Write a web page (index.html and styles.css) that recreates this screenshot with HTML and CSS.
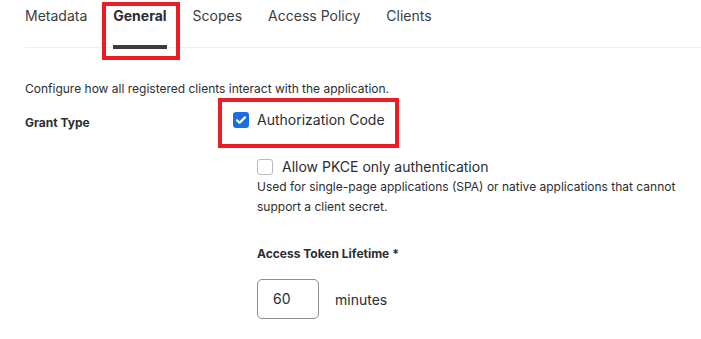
FILE: index.html
```html
<!DOCTYPE html>
<html>
<head>
<meta charset="utf-8">
<link rel="stylesheet" href="styles.css">
</head>
<body>
<div class="page">
  <nav class="tabs">
    <span class="tab">Metadata</span>
    <span class="tab active">General</span>
    <span class="tab">Scopes</span>
    <span class="tab">Access Policy</span>
    <span class="tab">Clients</span>
  </nav>
  <p class="intro">Configure how all registered clients interact with the application.</p>
  <div class="form-row">
    <div class="label">Grant Type</div>
    <div class="controls">
      <label class="check main">
        <span class="box checked"><svg viewBox="0 0 16 16" width="16" height="16"><path d="M4 8.3l2.6 2.5L12 5.4" fill="none" stroke="#fff" stroke-width="2.2" stroke-linecap="round" stroke-linejoin="round"/></svg></span>
        <span>Authorization Code</span>
      </label>
      <div class="sub">
        <label class="check">
          <span class="box"></span>
          <span>Allow PKCE only authentication</span>
        </label>
        <p class="help">Used for single-page applications (SPA) or native applications that cannot support a client secret.</p>
        <div class="field-label">Access Token Lifetime <span class="req">*</span></div>
        <div class="lifetime">
          <div class="input">60</div>
          <span class="unit">minutes</span>
        </div>
      </div>
    </div>
  </div>
  <div class="mark mark-tab"></div>
  <div class="mark mark-auth"></div>
</div>
</body>
</html>
```
FILE: styles.css
```css
html, body { margin: 0; padding: 0; background: #fff; }
body { font-family: Inter, "Noto Sans", sans-serif; color: #2b2d31; }
.page { position: relative; width: 701px; height: 339px; overflow: hidden; padding-left: 25px; box-sizing: border-box; }
.tabs { display: flex; gap: 26px; height: 47px; border-bottom: 1px solid #efefef; }
.tab { font-size: 14px; line-height: 20px; padding-top: 6px; height: 45px; box-sizing: content-box; color: #3a3c42; border-bottom: 4px solid transparent; }
.tab.active { font-weight: 700; color: #2b2d33; border-bottom-color: #3a3c42; height: 19px; padding-bottom: 20px; }
.intro { margin: 33px 0 0; font-size: 12px; line-height: 16px; color: #2b2d31; }
.form-row { display: grid; grid-template-columns: 208px 1fr; margin-top: 13px; }
.label { font-size: 12px; font-weight: 700; line-height: 16px; padding-top: 5px; color: #2b2d31; }
.controls { display: flex; flex-direction: column; }
.check { display: flex; align-items: center; gap: 8px; font-size: 14px; line-height: 20px; color: #2b2d31; }
.box { width: 14px; height: 14px; border: 1px solid #b8bcc2; border-radius: 3px; background: #fff; display: inline-flex; align-items: center; justify-content: center; flex: none; }
.box.checked { width: 16px; height: 16px; border: none; background: #1b6fe0; }
.sub { padding-left: 24px; margin-top: 27px; }
.sub .check { gap: 9px; }
.help { margin: 0; font-size: 12px; line-height: 20px; color: #2b2d31; width: 430px; }
.field-label { margin-top: 29px; font-size: 12px; font-weight: 700; line-height: 16px; }
.req { margin-left: 0; }
.lifetime { display: flex; align-items: center; gap: 16px; margin-top: 17px; }
.input { height: 38px; border: 1px solid #8a8d92; border-radius: 5px; font-size: 14px; line-height: 38px; padding-left: 15px; box-sizing: content-box; width: 45px; color: #2b2d31; }
.unit { font-size: 14px; }
.mark { position: absolute; border: 4px solid #ec1c24; box-sizing: border-box; }
.mark-tab { left: 102px; top: 2px; width: 78px; height: 58px; }
.mark-auth { left: 218px; top: 98px; width: 181px; height: 50px; }
```
